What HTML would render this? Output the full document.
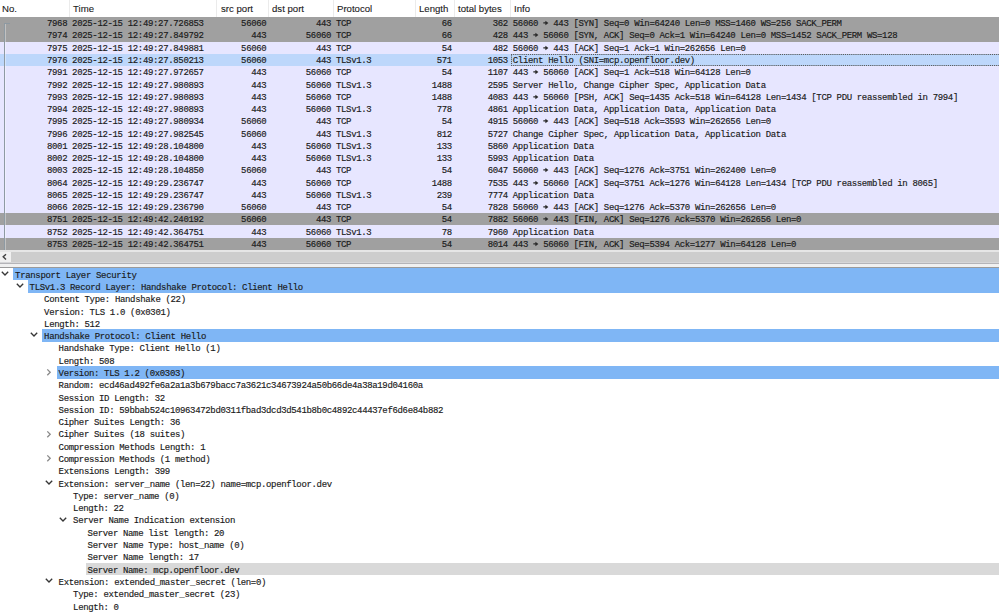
<!DOCTYPE html>
<html><head><meta charset="utf-8"><style>
html,body{margin:0;padding:0;}
body{width:999px;height:614px;overflow:hidden;position:relative;background:#fff;}
.m{font-family:"Liberation Mono",monospace;font-size:9.0px;letter-spacing:-0.342px;color:#1a1a1a;white-space:pre;-webkit-text-stroke:0.15px #1a1a1a;}
.s{font-family:"Liberation Sans",sans-serif;font-size:9.8px;transform:scaleX(0.98);transform-origin:0 0;color:#1a1a1a;white-space:pre;-webkit-text-stroke:0.1px #1a1a1a;}
.a{position:absolute;}
.hd{position:absolute;left:0;top:0;width:999px;height:17px;background:#fff;}
.sep{position:absolute;top:0;width:1px;height:17px;background:#ebebeb;}
.ar{display:inline-block;position:relative;width:5.058px;height:6px;vertical-align:-0.5px;}
.pr{position:absolute;left:0;width:999px;}
.c{position:absolute;top:1.2px;height:100%;transform:scaleY(1.08);line-height:12.263px;}
.tr{position:absolute;left:0;width:999px;height:12.290px;}
.hl{position:absolute;right:0;top:0;bottom:0;}
.tt{position:absolute;top:1.7px;transform:scaleY(1.08);line-height:12.290px;}
</style></head><body>

<div class="hd">
<div class="a s" style="left:1.8px;top:2.3px;line-height:13px">No.</div>
<div class="sep" style="left:68.8px"></div>
<div class="a s" style="left:73.0px;top:2.3px;line-height:13px">Time</div>
<div class="sep" style="left:216.3px"></div>
<div class="a s" style="left:220.5px;top:2.3px;line-height:13px">src port</div>
<div class="sep" style="left:268.0px"></div>
<div class="a s" style="left:272.2px;top:2.3px;line-height:13px">dst port</div>
<div class="sep" style="left:332.7px"></div>
<div class="a s" style="left:336.9px;top:2.3px;line-height:13px">Protocol</div>
<div class="sep" style="left:415.1px"></div>
<div class="a s" style="left:419.3px;top:2.3px;line-height:13px">Length</div>
<div class="sep" style="left:453.5px"></div>
<div class="a s" style="left:457.7px;top:2.3px;line-height:13px">total bytes</div>
<div class="sep" style="left:509.5px"></div>
<div class="a s" style="left:513.7px;top:2.3px;line-height:13px">Info</div>
</div>
<div class="pr m" style="top:17.000px;height:12.263px;background:#a0a0a0">
<div class="c" style="right:931.80px">7968</div>
<div class="c" style="left:72.10px">2025-12-15 12:49:27.726853</div>
<div class="c" style="right:732.60px">56060</div>
<div class="c" style="right:667.90px">443</div>
<div class="c" style="left:336.00px">TCP</div>
<div class="c" style="right:547.10px">66</div>
<div class="c" style="right:491.10px">362</div>
<div class="c" style="left:512.80px">56060 <span class="ar"><svg width="7" height="6" style="position:absolute;left:0;top:-1px"><path d="M0.3,3 H3.5" stroke="#2a2a2a" stroke-width="1.3"/><path d="M2.4,0.9 L5.4,3 L2.4,5.1 Z" fill="#2a2a2a"/></svg></span> 443 [SYN] Seq=0 Win=64240 Len=0 MSS=1460 WS=256 SACK_PERM</div>
</div>
<div class="pr m" style="top:29.263px;height:12.263px;background:#a0a0a0">
<div class="c" style="right:931.80px">7974</div>
<div class="c" style="left:72.10px">2025-12-15 12:49:27.849792</div>
<div class="c" style="right:732.60px">443</div>
<div class="c" style="right:667.90px">56060</div>
<div class="c" style="left:336.00px">TCP</div>
<div class="c" style="right:547.10px">66</div>
<div class="c" style="right:491.10px">428</div>
<div class="c" style="left:512.80px">443 <span class="ar"><svg width="7" height="6" style="position:absolute;left:0;top:-1px"><path d="M0.3,3 H3.5" stroke="#2a2a2a" stroke-width="1.3"/><path d="M2.4,0.9 L5.4,3 L2.4,5.1 Z" fill="#2a2a2a"/></svg></span> 56060 [SYN, ACK] Seq=0 Ack=1 Win=64240 Len=0 MSS=1452 SACK_PERM WS=128</div>
</div>
<div class="pr m" style="top:41.526px;height:12.263px;background:#e7e6ff">
<div class="c" style="right:931.80px">7975</div>
<div class="c" style="left:72.10px">2025-12-15 12:49:27.849881</div>
<div class="c" style="right:732.60px">56060</div>
<div class="c" style="right:667.90px">443</div>
<div class="c" style="left:336.00px">TCP</div>
<div class="c" style="right:547.10px">54</div>
<div class="c" style="right:491.10px">482</div>
<div class="c" style="left:512.80px">56060 <span class="ar"><svg width="7" height="6" style="position:absolute;left:0;top:-1px"><path d="M0.3,3 H3.5" stroke="#2a2a2a" stroke-width="1.3"/><path d="M2.4,0.9 L5.4,3 L2.4,5.1 Z" fill="#2a2a2a"/></svg></span> 443 [ACK] Seq=1 Ack=1 Win=262656 Len=0</div>
</div>
<div class="pr m" style="top:53.789px;height:12.263px;background:#bdd7fb">
<div class="c" style="right:931.80px">7976</div>
<div class="c" style="left:72.10px">2025-12-15 12:49:27.850213</div>
<div class="c" style="right:732.60px">56060</div>
<div class="c" style="right:667.90px">443</div>
<div class="c" style="left:336.00px">TLSv1.3</div>
<div class="c" style="right:547.10px">571</div>
<div class="c" style="right:491.10px">1053</div>
<div class="c" style="left:512.80px">Client Hello (SNI=mcp.openfloor.dev)</div>
<svg class="a" style="left:0;top:0" width="999" height="13"><g stroke="#5a5a5a" stroke-width="1" stroke-dasharray="1.2,0.9" fill="none"><path d="M511,0.5 H999"/><path d="M511,11.5 H999"/><path d="M511.5,0.5 V11.5"/></g></svg>
</div>
<div class="pr m" style="top:66.053px;height:12.263px;background:#e7e6ff">
<div class="c" style="right:931.80px">7991</div>
<div class="c" style="left:72.10px">2025-12-15 12:49:27.972657</div>
<div class="c" style="right:732.60px">443</div>
<div class="c" style="right:667.90px">56060</div>
<div class="c" style="left:336.00px">TCP</div>
<div class="c" style="right:547.10px">54</div>
<div class="c" style="right:491.10px">1107</div>
<div class="c" style="left:512.80px">443 <span class="ar"><svg width="7" height="6" style="position:absolute;left:0;top:-1px"><path d="M0.3,3 H3.5" stroke="#2a2a2a" stroke-width="1.3"/><path d="M2.4,0.9 L5.4,3 L2.4,5.1 Z" fill="#2a2a2a"/></svg></span> 56060 [ACK] Seq=1 Ack=518 Win=64128 Len=0</div>
</div>
<div class="pr m" style="top:78.316px;height:12.263px;background:#e7e6ff">
<div class="c" style="right:931.80px">7992</div>
<div class="c" style="left:72.10px">2025-12-15 12:49:27.980893</div>
<div class="c" style="right:732.60px">443</div>
<div class="c" style="right:667.90px">56060</div>
<div class="c" style="left:336.00px">TLSv1.3</div>
<div class="c" style="right:547.10px">1488</div>
<div class="c" style="right:491.10px">2595</div>
<div class="c" style="left:512.80px">Server Hello, Change Cipher Spec, Application Data</div>
</div>
<div class="pr m" style="top:90.579px;height:12.263px;background:#e7e6ff">
<div class="c" style="right:931.80px">7993</div>
<div class="c" style="left:72.10px">2025-12-15 12:49:27.980893</div>
<div class="c" style="right:732.60px">443</div>
<div class="c" style="right:667.90px">56060</div>
<div class="c" style="left:336.00px">TCP</div>
<div class="c" style="right:547.10px">1488</div>
<div class="c" style="right:491.10px">4083</div>
<div class="c" style="left:512.80px">443 <span class="ar"><svg width="7" height="6" style="position:absolute;left:0;top:-1px"><path d="M0.3,3 H3.5" stroke="#2a2a2a" stroke-width="1.3"/><path d="M2.4,0.9 L5.4,3 L2.4,5.1 Z" fill="#2a2a2a"/></svg></span> 56060 [PSH, ACK] Seq=1435 Ack=518 Win=64128 Len=1434 [TCP PDU reassembled in 7994]</div>
</div>
<div class="pr m" style="top:102.842px;height:12.263px;background:#e7e6ff">
<div class="c" style="right:931.80px">7994</div>
<div class="c" style="left:72.10px">2025-12-15 12:49:27.980893</div>
<div class="c" style="right:732.60px">443</div>
<div class="c" style="right:667.90px">56060</div>
<div class="c" style="left:336.00px">TLSv1.3</div>
<div class="c" style="right:547.10px">778</div>
<div class="c" style="right:491.10px">4861</div>
<div class="c" style="left:512.80px">Application Data, Application Data, Application Data</div>
</div>
<div class="pr m" style="top:115.105px;height:12.263px;background:#e7e6ff">
<div class="c" style="right:931.80px">7995</div>
<div class="c" style="left:72.10px">2025-12-15 12:49:27.980934</div>
<div class="c" style="right:732.60px">56060</div>
<div class="c" style="right:667.90px">443</div>
<div class="c" style="left:336.00px">TCP</div>
<div class="c" style="right:547.10px">54</div>
<div class="c" style="right:491.10px">4915</div>
<div class="c" style="left:512.80px">56060 <span class="ar"><svg width="7" height="6" style="position:absolute;left:0;top:-1px"><path d="M0.3,3 H3.5" stroke="#2a2a2a" stroke-width="1.3"/><path d="M2.4,0.9 L5.4,3 L2.4,5.1 Z" fill="#2a2a2a"/></svg></span> 443 [ACK] Seq=518 Ack=3593 Win=262656 Len=0</div>
</div>
<div class="pr m" style="top:127.368px;height:12.263px;background:#e7e6ff">
<div class="c" style="right:931.80px">7996</div>
<div class="c" style="left:72.10px">2025-12-15 12:49:27.982545</div>
<div class="c" style="right:732.60px">56060</div>
<div class="c" style="right:667.90px">443</div>
<div class="c" style="left:336.00px">TLSv1.3</div>
<div class="c" style="right:547.10px">812</div>
<div class="c" style="right:491.10px">5727</div>
<div class="c" style="left:512.80px">Change Cipher Spec, Application Data, Application Data</div>
</div>
<div class="pr m" style="top:139.632px;height:12.263px;background:#e7e6ff">
<div class="c" style="right:931.80px">8001</div>
<div class="c" style="left:72.10px">2025-12-15 12:49:28.104800</div>
<div class="c" style="right:732.60px">443</div>
<div class="c" style="right:667.90px">56060</div>
<div class="c" style="left:336.00px">TLSv1.3</div>
<div class="c" style="right:547.10px">133</div>
<div class="c" style="right:491.10px">5860</div>
<div class="c" style="left:512.80px">Application Data</div>
</div>
<div class="pr m" style="top:151.895px;height:12.263px;background:#e7e6ff">
<div class="c" style="right:931.80px">8002</div>
<div class="c" style="left:72.10px">2025-12-15 12:49:28.104800</div>
<div class="c" style="right:732.60px">443</div>
<div class="c" style="right:667.90px">56060</div>
<div class="c" style="left:336.00px">TLSv1.3</div>
<div class="c" style="right:547.10px">133</div>
<div class="c" style="right:491.10px">5993</div>
<div class="c" style="left:512.80px">Application Data</div>
</div>
<div class="pr m" style="top:164.158px;height:12.263px;background:#e7e6ff">
<div class="c" style="right:931.80px">8003</div>
<div class="c" style="left:72.10px">2025-12-15 12:49:28.104850</div>
<div class="c" style="right:732.60px">56060</div>
<div class="c" style="right:667.90px">443</div>
<div class="c" style="left:336.00px">TCP</div>
<div class="c" style="right:547.10px">54</div>
<div class="c" style="right:491.10px">6047</div>
<div class="c" style="left:512.80px">56060 <span class="ar"><svg width="7" height="6" style="position:absolute;left:0;top:-1px"><path d="M0.3,3 H3.5" stroke="#2a2a2a" stroke-width="1.3"/><path d="M2.4,0.9 L5.4,3 L2.4,5.1 Z" fill="#2a2a2a"/></svg></span> 443 [ACK] Seq=1276 Ack=3751 Win=262400 Len=0</div>
</div>
<div class="pr m" style="top:176.421px;height:12.263px;background:#e7e6ff">
<div class="c" style="right:931.80px">8064</div>
<div class="c" style="left:72.10px">2025-12-15 12:49:29.236747</div>
<div class="c" style="right:732.60px">443</div>
<div class="c" style="right:667.90px">56060</div>
<div class="c" style="left:336.00px">TCP</div>
<div class="c" style="right:547.10px">1488</div>
<div class="c" style="right:491.10px">7535</div>
<div class="c" style="left:512.80px">443 <span class="ar"><svg width="7" height="6" style="position:absolute;left:0;top:-1px"><path d="M0.3,3 H3.5" stroke="#2a2a2a" stroke-width="1.3"/><path d="M2.4,0.9 L5.4,3 L2.4,5.1 Z" fill="#2a2a2a"/></svg></span> 56060 [ACK] Seq=3751 Ack=1276 Win=64128 Len=1434 [TCP PDU reassembled in 8065]</div>
</div>
<div class="pr m" style="top:188.684px;height:12.263px;background:#e7e6ff">
<div class="c" style="right:931.80px">8065</div>
<div class="c" style="left:72.10px">2025-12-15 12:49:29.236747</div>
<div class="c" style="right:732.60px">443</div>
<div class="c" style="right:667.90px">56060</div>
<div class="c" style="left:336.00px">TLSv1.3</div>
<div class="c" style="right:547.10px">239</div>
<div class="c" style="right:491.10px">7774</div>
<div class="c" style="left:512.80px">Application Data</div>
</div>
<div class="pr m" style="top:200.947px;height:12.263px;background:#e7e6ff">
<div class="c" style="right:931.80px">8066</div>
<div class="c" style="left:72.10px">2025-12-15 12:49:29.236790</div>
<div class="c" style="right:732.60px">56060</div>
<div class="c" style="right:667.90px">443</div>
<div class="c" style="left:336.00px">TCP</div>
<div class="c" style="right:547.10px">54</div>
<div class="c" style="right:491.10px">7828</div>
<div class="c" style="left:512.80px">56060 <span class="ar"><svg width="7" height="6" style="position:absolute;left:0;top:-1px"><path d="M0.3,3 H3.5" stroke="#2a2a2a" stroke-width="1.3"/><path d="M2.4,0.9 L5.4,3 L2.4,5.1 Z" fill="#2a2a2a"/></svg></span> 443 [ACK] Seq=1276 Ack=5370 Win=262656 Len=0</div>
</div>
<div class="pr m" style="top:213.211px;height:12.263px;background:#a0a0a0">
<div class="c" style="right:931.80px">8751</div>
<div class="c" style="left:72.10px">2025-12-15 12:49:42.240192</div>
<div class="c" style="right:732.60px">56060</div>
<div class="c" style="right:667.90px">443</div>
<div class="c" style="left:336.00px">TCP</div>
<div class="c" style="right:547.10px">54</div>
<div class="c" style="right:491.10px">7882</div>
<div class="c" style="left:512.80px">56060 <span class="ar"><svg width="7" height="6" style="position:absolute;left:0;top:-1px"><path d="M0.3,3 H3.5" stroke="#2a2a2a" stroke-width="1.3"/><path d="M2.4,0.9 L5.4,3 L2.4,5.1 Z" fill="#2a2a2a"/></svg></span> 443 [FIN, ACK] Seq=1276 Ack=5370 Win=262656 Len=0</div>
</div>
<div class="pr m" style="top:225.474px;height:12.263px;background:#e7e6ff">
<div class="c" style="right:931.80px">8752</div>
<div class="c" style="left:72.10px">2025-12-15 12:49:42.364751</div>
<div class="c" style="right:732.60px">443</div>
<div class="c" style="right:667.90px">56060</div>
<div class="c" style="left:336.00px">TLSv1.3</div>
<div class="c" style="right:547.10px">78</div>
<div class="c" style="right:491.10px">7960</div>
<div class="c" style="left:512.80px">Application Data</div>
</div>
<div class="pr m" style="top:237.737px;height:12.263px;background:#a0a0a0">
<div class="c" style="right:931.80px">8753</div>
<div class="c" style="left:72.10px">2025-12-15 12:49:42.364751</div>
<div class="c" style="right:732.60px">443</div>
<div class="c" style="right:667.90px">56060</div>
<div class="c" style="left:336.00px">TCP</div>
<div class="c" style="right:547.10px">54</div>
<div class="c" style="right:491.10px">8014</div>
<div class="c" style="left:512.80px">443 <span class="ar"><svg width="7" height="6" style="position:absolute;left:0;top:-1px"><path d="M0.3,3 H3.5" stroke="#2a2a2a" stroke-width="1.3"/><path d="M2.4,0.9 L5.4,3 L2.4,5.1 Z" fill="#2a2a2a"/></svg></span> 56060 [FIN, ACK] Seq=5394 Ack=1277 Win=64128 Len=0</div>
</div>
<div class="a" style="left:4px;top:23px;width:1px;height:227px;background:#8e9aa3"></div>
<div class="a" style="left:5px;top:24px;width:1px;height:226px;background:rgba(255,255,255,0.35)"></div>
<div class="a" style="left:4px;top:23px;width:6px;height:1px;background:#8d99a2"></div>
<div class="a" style="left:0;top:250px;width:999px;height:18px;background:#f0f0f0"></div>
<div class="a" style="left:0;top:250px;width:999px;height:1.5px;background:#e6e6e6"></div>
<div class="a" style="left:11px;top:251.5px;width:988px;height:10px;background:#cdcdcd"></div>
<div class="a" style="left:0;top:261.7px;width:999px;height:1.5px;background:#d6d6d8"></div>
<div class="a" style="left:0;top:263px;width:999px;height:1px;background:#b4b4b8"></div>
<div class="a" style="left:0;top:267px;width:999px;height:1px;background:#9a9a9a"></div>
<svg class="a" style="left:0;top:250px" width="12" height="14"><path d="M6,4.2 L3.2,6.8 L6,9.4" stroke="#404040" stroke-width="1.4" fill="none"/></svg>
<div class="a" style="left:0;top:268px;width:999px;height:346px;background:#fff"></div>
<div class="tr m" style="top:268.000px">
<div class="hl" style="left:13.10px;background:#7fb6f5"></div>
<svg class="a" style="left:0.10px;top:0" width="10" height="12"><path d="M1.8,3.8 L5,7 L8.2,3.8" stroke="#363636" stroke-width="1.35" fill="none"/></svg>
<div class="tt" style="left:15.10px">Transport Layer Security</div>
</div>
<div class="tr m" style="top:280.290px">
<div class="hl" style="left:27.60px;background:#7fb6f5"></div>
<svg class="a" style="left:14.60px;top:0" width="10" height="12"><path d="M1.8,3.8 L5,7 L8.2,3.8" stroke="#363636" stroke-width="1.35" fill="none"/></svg>
<div class="tt" style="left:29.60px">TLSv1.3 Record Layer: Handshake Protocol: Client Hello</div>
</div>
<div class="tr m" style="top:292.580px">
<div class="tt" style="left:44.10px">Content Type: Handshake (22)</div>
</div>
<div class="tr m" style="top:304.870px">
<div class="tt" style="left:44.10px">Version: TLS 1.0 (0x0301)</div>
</div>
<div class="tr m" style="top:317.160px">
<div class="tt" style="left:44.10px">Length: 512</div>
</div>
<div class="tr m" style="top:329.450px">
<div class="hl" style="left:42.10px;background:#7fb6f5"></div>
<svg class="a" style="left:29.10px;top:0" width="10" height="12"><path d="M1.8,3.8 L5,7 L8.2,3.8" stroke="#363636" stroke-width="1.35" fill="none"/></svg>
<div class="tt" style="left:44.10px">Handshake Protocol: Client Hello</div>
</div>
<div class="tr m" style="top:341.740px">
<div class="tt" style="left:58.60px">Handshake Type: Client Hello (1)</div>
</div>
<div class="tr m" style="top:354.030px">
<div class="tt" style="left:58.60px">Length: 508</div>
</div>
<div class="tr m" style="top:366.320px">
<div class="hl" style="left:56.60px;background:#7fb6f5"></div>
<svg class="a" style="left:44.10px;top:0" width="10" height="12"><path d="M3.3,3.4 L6.2,6.3 L3.3,9.2" stroke="#8a8a8a" stroke-width="1.3" fill="none"/></svg>
<div class="tt" style="left:58.60px">Version: TLS 1.2 (0x0303)</div>
</div>
<div class="tr m" style="top:378.610px">
<div class="tt" style="left:58.60px">Random: ecd46ad492fe6a2a1a3b679bacc7a3621c34673924a50b66de4a38a19d04160a</div>
</div>
<div class="tr m" style="top:390.900px">
<div class="tt" style="left:58.60px">Session ID Length: 32</div>
</div>
<div class="tr m" style="top:403.190px">
<div class="tt" style="left:58.60px">Session ID: 59bbab524c10963472bd0311fbad3dcd3d541b8b0c4892c44437ef6d6e84b882</div>
</div>
<div class="tr m" style="top:415.480px">
<div class="tt" style="left:58.60px">Cipher Suites Length: 36</div>
</div>
<div class="tr m" style="top:427.770px">
<svg class="a" style="left:44.10px;top:0" width="10" height="12"><path d="M3.3,3.4 L6.2,6.3 L3.3,9.2" stroke="#8a8a8a" stroke-width="1.3" fill="none"/></svg>
<div class="tt" style="left:58.60px">Cipher Suites (18 suites)</div>
</div>
<div class="tr m" style="top:440.060px">
<div class="tt" style="left:58.60px">Compression Methods Length: 1</div>
</div>
<div class="tr m" style="top:452.350px">
<svg class="a" style="left:44.10px;top:0" width="10" height="12"><path d="M3.3,3.4 L6.2,6.3 L3.3,9.2" stroke="#8a8a8a" stroke-width="1.3" fill="none"/></svg>
<div class="tt" style="left:58.60px">Compression Methods (1 method)</div>
</div>
<div class="tr m" style="top:464.640px">
<div class="tt" style="left:58.60px">Extensions Length: 399</div>
</div>
<div class="tr m" style="top:476.930px">
<svg class="a" style="left:43.60px;top:0" width="10" height="12"><path d="M1.8,3.8 L5,7 L8.2,3.8" stroke="#363636" stroke-width="1.35" fill="none"/></svg>
<div class="tt" style="left:58.60px">Extension: server_name (len=22) name=mcp.openfloor.dev</div>
</div>
<div class="tr m" style="top:489.220px">
<div class="tt" style="left:73.10px">Type: server_name (0)</div>
</div>
<div class="tr m" style="top:501.510px">
<div class="tt" style="left:73.10px">Length: 22</div>
</div>
<div class="tr m" style="top:513.800px">
<svg class="a" style="left:58.10px;top:0" width="10" height="12"><path d="M1.8,3.8 L5,7 L8.2,3.8" stroke="#363636" stroke-width="1.35" fill="none"/></svg>
<div class="tt" style="left:73.10px">Server Name Indication extension</div>
</div>
<div class="tr m" style="top:526.090px">
<div class="tt" style="left:87.60px">Server Name list length: 20</div>
</div>
<div class="tr m" style="top:538.380px">
<div class="tt" style="left:87.60px">Server Name Type: host_name (0)</div>
</div>
<div class="tr m" style="top:550.670px">
<div class="tt" style="left:87.60px">Server Name length: 17</div>
</div>
<div class="tr m" style="top:562.960px">
<div class="hl" style="left:85.60px;background:#d9d9d9"></div>
<div class="tt" style="left:87.60px">Server Name: mcp.openfloor.dev</div>
</div>
<div class="tr m" style="top:575.250px">
<svg class="a" style="left:43.60px;top:0" width="10" height="12"><path d="M1.8,3.8 L5,7 L8.2,3.8" stroke="#363636" stroke-width="1.35" fill="none"/></svg>
<div class="tt" style="left:58.60px">Extension: extended_master_secret (len=0)</div>
</div>
<div class="tr m" style="top:587.540px">
<div class="tt" style="left:73.10px">Type: extended_master_secret (23)</div>
</div>
<div class="tr m" style="top:599.830px">
<div class="tt" style="left:73.10px">Length: 0</div>
</div>
</body></html>
